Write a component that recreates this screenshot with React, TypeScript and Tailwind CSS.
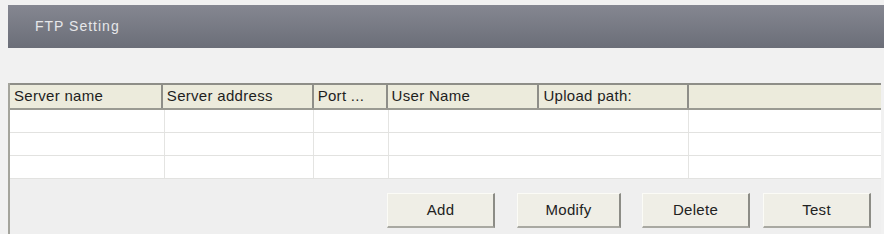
import React from "react";

const cols = [
  { label: "Server name", w: 153 },
  { label: "Server address", w: 151 },
  { label: "Port ...", w: 74 },
  { label: "User Name", w: 152 },
  { label: "Upload path:", w: 150 },
  { label: "", w: 192 },
];

const dataCols = [155, 149, 75, 301, 192];

function Btn({ label, w, ml }: { label: string; w: number; ml: number }) {
  return (
    <div
      className="h-[35px] flex items-center justify-center bg-[#efeee6] border-t border-l border-t-[#fbfbf6] border-l-[#fbfbf6] border-r-2 border-b-2 border-r-[#8c8c86] border-b-[#a9a9a2] text-[15px] text-[#222] tracking-[0.3px]"
      style={{ width: w, marginLeft: ml }}
    >
      {label}
    </div>
  );
}

export default function App() {
  return (
    <div
      className="w-[884px] h-[234px] bg-[#f1f1f1] overflow-hidden pt-[5px] pl-[8px]"
      style={{ fontFamily: '"Liberation Sans", Arial, sans-serif' }}
    >
      <div className="h-[43px] w-[876px] bg-gradient-to-b from-[#858791] to-[#6b6e78] flex items-center pl-[27px] text-[14px] text-[#e6e7ea] tracking-[1px]">
        FTP Setting
      </div>
      <div className="h-[35px]" />
      <div className="w-[873px] border-l-2 border-l-[#a4a49c]">
        <div className="flex h-[27px] bg-[#ecebdc] border-t-2 border-t-[#8e8e88] border-b-2 border-b-[#9a9a92]">
          {cols.map((c, i) => (
            <div
              key={i}
              className="flex items-center pl-[4px] text-[15px] text-[#1e1e1e] tracking-[0.3px] border-r-2 border-r-[#8e8e88] last:border-r-0 whitespace-nowrap"
              style={{ width: c.w }}
            >
              {c.label}
            </div>
          ))}
        </div>
        {[0, 1, 2].map((r) => (
          <div key={r} className="flex h-[23px] bg-white border-b border-b-[#e2e2e0]">
            {dataCols.map((w, i) => (
              <div
                key={i}
                className="border-r border-r-[#e4e4e2] last:border-r-0"
                style={{ width: w }}
              />
            ))}
          </div>
        ))}
        <div className="h-[56px] bg-[#efefef] flex pt-[14px]">
          <Btn label="Add" w={108} ml={377} />
          <Btn label="Modify" w={104} ml={22} />
          <Btn label="Delete" w={108} ml={21} />
          <Btn label="Test" w={108} ml={13} />
        </div>
      </div>
    </div>
  );
}
